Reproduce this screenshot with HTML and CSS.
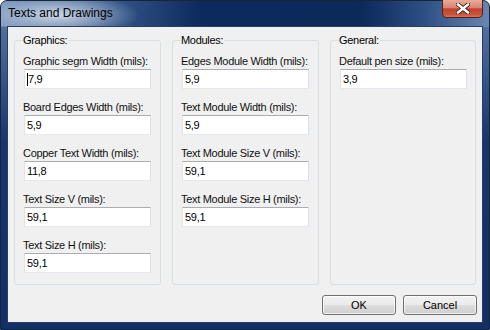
FILE: index.html
```html
<!DOCTYPE html>
<html lang="en">

<head>
    <meta charset="UTF-8">
    <title>Texts and Drawings</title>
    <link rel="stylesheet" href="styles.css">
</head>

<body>
    <div class="window">
        <!-- title bar -->
        <div class="titlebar">
            <span class="title">Texts and Drawings</span>
            <button class="close-btn" aria-label="Close">
                <svg width="14" height="11" viewBox="0 0 14 11">
                    <path d="M2 1.5 L12 9.5 M12 1.5 L2 9.5" stroke="#4a1a14" stroke-width="4.2" stroke-linecap="square" />
                    <path d="M2 1.5 L12 9.5 M12 1.5 L2 9.5" stroke="#fff" stroke-width="2.4" stroke-linecap="square" />
                </svg>
            </button>
        </div>

        <div class="client">
            <div class="groups">
                <fieldset class="group">
                    <legend>Graphics:</legend>
                    <div class="field">
                        <label>Graphic segm Width (mils):</label>
                        <div class="textbox"><span class="caret"></span>7,9</div>
                    </div>
                    <div class="field">
                        <label>Board Edges Width (mils):</label>
                        <div class="textbox">5,9</div>
                    </div>
                    <div class="field">
                        <label>Copper Text Width (mils):</label>
                        <div class="textbox">11,8</div>
                    </div>
                    <div class="field">
                        <label>Text Size V (mils):</label>
                        <div class="textbox">59,1</div>
                    </div>
                    <div class="field">
                        <label>Text Size H (mils):</label>
                        <div class="textbox">59,1</div>
                    </div>
                </fieldset>

                <fieldset class="group">
                    <legend>Modules:</legend>
                    <div class="field">
                        <label>Edges Module Width (mils):</label>
                        <div class="textbox">5,9</div>
                    </div>
                    <div class="field">
                        <label>Text Module Width (mils):</label>
                        <div class="textbox">5,9</div>
                    </div>
                    <div class="field">
                        <label>Text Module Size V (mils):</label>
                        <div class="textbox">59,1</div>
                    </div>
                    <div class="field">
                        <label>Text Module Size H (mils):</label>
                        <div class="textbox">59,1</div>
                    </div>
                </fieldset>

                <fieldset class="group">
                    <legend>General:</legend>
                    <div class="field">
                        <label>Default pen size (mils):</label>
                        <div class="textbox">3,9</div>
                    </div>
                </fieldset>
            </div>

            <div class="buttons">
                <button class="btn">OK</button>
                <button class="btn">Cancel</button>
            </div>
        </div>
    </div>
</body>

</html>
```

FILE: styles.css
```css
* {
    box-sizing: border-box;
    margin: 0;
    padding: 0;
}

body {
    font-family: 'Liberation Sans', Arial, sans-serif;
    font-size: 11px;
    color: #000;
    background: #fff;
}

/* window frame */
.window {
    width: 490px;
    height: 330px;
    display: flex;
    flex-direction: column;
    border: 1px solid #18243a;
    border-radius: 7px 7px 0 0;
    padding: 0 6px 6px 6px;
    background:
        linear-gradient(to right, #7591b9 0, #5a7aa8 30px, #2c4d80 130px, #0c2a5c 200px, #0b2959 360px, #2e5085 425px, #6a88b2 490px) 0 0 / 100% 26px no-repeat,
        linear-gradient(to bottom, #5f7da9 0, #3d5e90 60px, #17366c 140px, #122f66 100%);
}

.titlebar {
    height: 25px;
    display: flex;
    align-items: flex-start;
    background: radial-gradient(ellipse 82px 22px at 56px 14px, rgba(214, 224, 236, 0.92), rgba(214, 224, 236, 0) 100%);
    margin: 0 -6px;
    padding: 0 6px;
}

.title {
    font-size: 12px;
    line-height: 25px;
    padding-left: 1px;
    color: #000;
}

.close-btn {
    margin-left: auto;
    margin-top: -1px;
    width: 41px;
    height: 18px;
    border: 1px solid #5b1d16;
    border-top: none;
    border-radius: 0 0 5px 5px;
    background: linear-gradient(to bottom, #e9ab9a 0%, #d88672 45%, #c2412d 52%, #c9553b 85%, #d8735a 100%);
    display: flex;
    justify-content: center;
    align-items: center;
    cursor: pointer;
}

/* client area */
.client {
    flex: 1;
    background-color: #f0f0f0;
    border: 1px solid #2a3f60;
    padding: 6px 5px 6px 6px;
    display: flex;
    flex-direction: column;
    letter-spacing: -0.3px;
}

.groups {
    height: 251px;
    display: grid;
    grid-template-columns: 147px 147px 146px;
    column-gap: 11px;
}

.group {
    border: 1px solid #d5dfe5;
    border-radius: 3px;
    padding: 7px 9px 0 8px;
    min-width: 0;
}

.group legend {
    font-size: 11px;
    line-height: 14px;
    padding: 0 1px 0 0;
}

.field {
    margin-bottom: 11px;
}

.field label {
    display: block;
    line-height: 14px;
    white-space: nowrap;
    color: #111;
}

.textbox {
    margin: 1px 0 0 1px;
    width: 127px;
    height: 20px;
    line-height: 18px;
    padding-left: 2px;
    background: #fff;
    border: 1px solid;
    border-color: #abadb3 #dbdfe6 #e3e9ef #e2e3ea;
    display: flex;
    align-items: center;
}

.caret {
    width: 1px;
    height: 13px;
    background: #000;
}

/* dialog buttons */
.buttons {
    margin-top: 11px;
    display: flex;
    justify-content: flex-end;
    gap: 7px;
}

.btn {
    width: 74px;
    height: 20px;
    font-family: inherit;
    font-size: 11px;
    letter-spacing: 0;
    color: #000;
    border: 1px solid #707070;
    border-radius: 3px;
    background: linear-gradient(to bottom, #f2f2f2 0%, #ebebeb 50%, #dddddd 51%, #cfcfcf 100%);
    box-shadow: inset 0 0 0 1px rgba(255, 255, 255, 0.7);
    cursor: pointer;
}
```
